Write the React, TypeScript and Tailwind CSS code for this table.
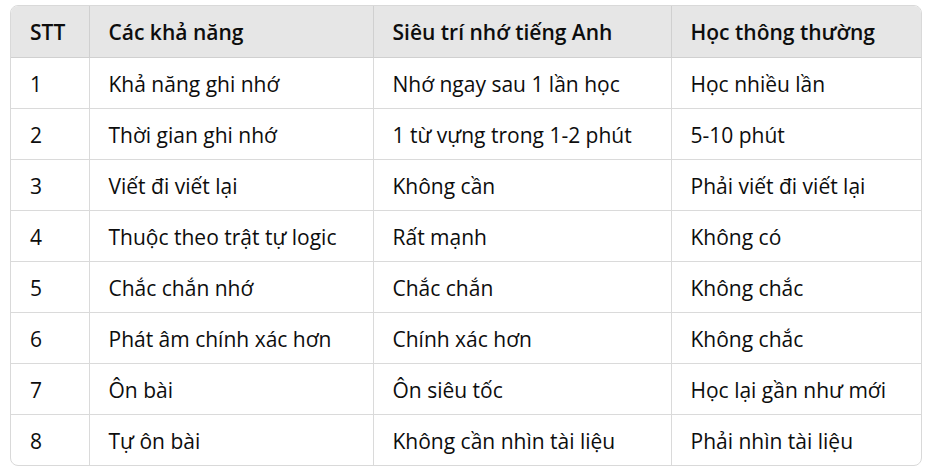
const headers = ["STT", "Các khả năng", "Siêu trí nhớ tiếng Anh", "Học thông thường"];

const rows = [
  ["1", "Khả năng ghi nhớ", "Nhớ ngay sau 1 lần học", "Học nhiều lần"],
  ["2", "Thời gian ghi nhớ", "1 từ vựng trong 1-2 phút", "5-10 phút"],
  ["3", "Viết đi viết lại", "Không cần", "Phải viết đi viết lại"],
  ["4", "Thuộc theo trật tự logic", "Rất mạnh", "Không có"],
  ["5", "Chắc chắn nhớ", "Chắc chắn", "Không chắc"],
  ["6", "Phát âm chính xác hơn", "Chính xác hơn", "Không chắc"],
  ["7", "Ôn bài", "Ôn siêu tốc", "Học lại gần như mới"],
  ["8", "Tự ôn bài", "Không cần nhìn tài liệu", "Phải nhìn tài liệu"],
];

const widths = ["w-[78px]", "w-[284px]", "w-[298px]", "w-[251px]"];

export default function App() {
  return (
    <div className="bg-white w-[930px] h-[473px] pt-[5px] pl-[10px]" style={{ fontFamily: '"Open Sans", "Noto Sans", sans-serif' }}>
      <div className="w-[912px] rounded-lg border border-[#d9d9d9] overflow-hidden">
        <table className="w-full border-collapse table-fixed text-[21px] leading-none text-[#0d0d0d]">
          <thead>
            <tr className="bg-[#e6e6e6] h-[51px]">
              {headers.map((h, i) => (
                <th
                  key={h}
                  className={`${widths[i]} text-left font-semibold pl-[19px] pt-[3px] border-b border-[#d0d0d0] ${i > 0 ? "border-l" : ""}`}
                >
                  {h}
                </th>
              ))}
            </tr>
          </thead>
          <tbody>
            {rows.map((r, ri) => (
              <tr key={r[0]} className="h-[51px]">
                {r.map((c, i) => (
                  <td
                    key={i}
                    className={`pl-[19px] pt-[3px] border-[#dadada] ${i > 0 ? "border-l" : ""} ${ri < rows.length - 1 ? "border-b" : ""}`}
                  >
                    {c}
                  </td>
                ))}
              </tr>
            ))}
          </tbody>
        </table>
      </div>
    </div>
  );
}
